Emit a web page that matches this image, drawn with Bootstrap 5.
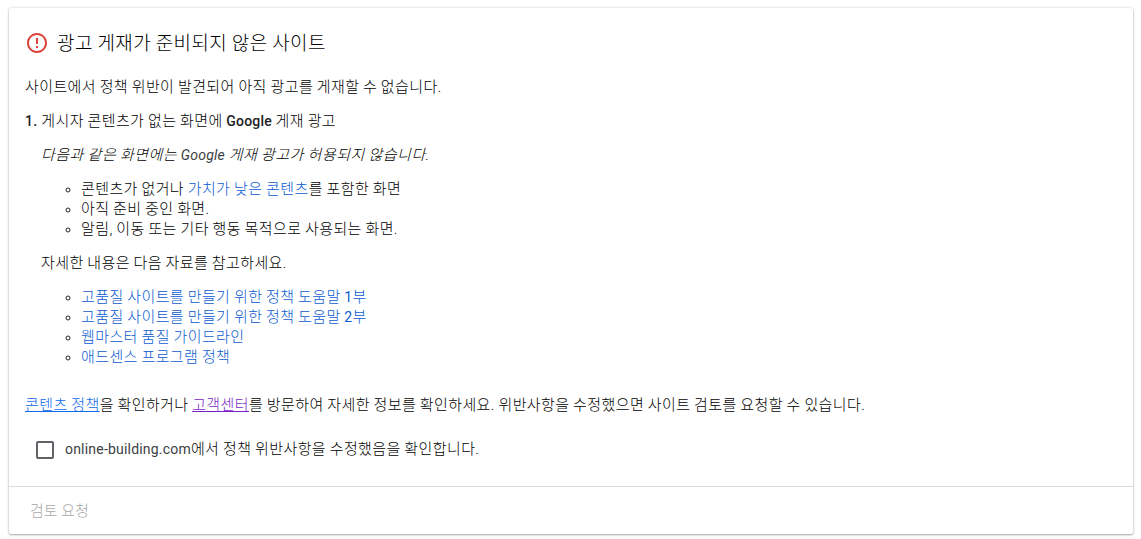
<!DOCTYPE html>
<html lang="ko">

<head>
  <meta charset="UTF-8">
  <meta name="viewport" content="width=device-width, initial-scale=1.0">
  <title>사이트 검토</title>
  <link href="https://cdn.jsdelivr.net/npm/bootstrap@5.3.0/dist/css/bootstrap.min.css" rel="stylesheet">
  <style>
    body {
      font-family: Roboto, "Noto Sans CJK KR", sans-serif;
      font-size: 15px;
      font-weight: 300;
      line-height: 20px;
      color: #000;
      background: #fff;
      padding: 8px 8px 5px 9px;
      letter-spacing: .4px;
      word-spacing: -.4px;
    }

    .review-card {
      width: 1124px;
      height: 526px;
      border: 0;
      border-radius: 2px;
      box-shadow: 0 1px 2px rgba(0, 0, 0, .3), 0 0 3px rgba(0, 0, 0, .16);
    }

    .review-body { padding: 23px 16px 0; }
    .review-heading { margin-bottom: 21px; }
    .review-title { font-size: 19px; font-weight: 300; line-height: 24px; padding-top: 1px; color: #000; }
    .review-body p { margin-bottom: 14px; }
    .review-body ul { padding-left: 40px; margin-bottom: 14px; list-style: circle; }
    .review-body li::marker { font-size: 13px; color: #202124; }
    .latin { font-size: 14px; font-weight: 400; letter-spacing: .2px; line-height: 1; }
    .latin-strong { font-weight: 500; color: #202124; }
    .latin-soft { color: #3c4043; }
    .issue { padding-left: 16px; }
    .issue .fst-italic { letter-spacing: .5px; }
    .review-body a { color: #0b5bd0; text-decoration: none; }
    .review-body .inline-link { color: #0f69ec; text-decoration: underline; }
    .review-body .visited { color: #7a1fc8; }
    .summary { margin-top: 28px; }

    .form-check-input.confirm-box {
      width: 18px;
      height: 18px;
      border: 2px solid #5f6368;
      border-radius: 2px;
    }

    .confirm-row { padding-left: 11px; margin-top: 24px; }
    .confirm-label { margin-left: 11px; padding-bottom: 2px; }
    .review-footer { height: 48px; border-top: 1px solid #dadce0; padding-left: 21px; }
    .request-btn { color: #a8a8a8; font-weight: 300; letter-spacing: 0; }
  </style>
</head>

<body>
  <main class="card review-card">
    <div class="review-body flex-grow-1">
      <div class="d-flex align-items-start review-heading">
        <svg class="me-2" width="24" height="24" viewBox="0 0 24 24" fill="#db4437" aria-hidden="true">
          <path d="M11 15h2v2h-2zm0-8h2v6h-2zm.99-5C6.47 2 2 6.48 2 12s4.47 10 9.99 10C17.52 22 22 17.52 22 12S17.52 2 11.99 2zM12 20c-4.42 0-8-3.58-8-8s3.58-8 8-8 8 3.58 8 8-3.58 8-8 8z" />
        </svg>
        <h1 class="review-title mb-0">광고 게재가 준비되지 않은 사이트</h1>
      </div>

      <p class="intro">사이트에서 정책 위반이 발견되어 아직 광고를 게재할 수 없습니다.</p>
      <p><span class="latin latin-strong me-1">1.</span>게시자 콘텐츠가 없는 화면에 <span class="latin latin-strong">Google</span> 게재 광고</p>

      <div class="issue">
        <p class="fst-italic">다음과 같은 화면에는 <span class="latin latin-soft">Google</span> 게재 광고가 허용되지 않습니다.</p>
        <ul>
          <li>콘텐츠가 없거나 <a href="#">가치가 낮은 콘텐츠</a>를 포함한 화면</li>
          <li>아직 준비 중인 화면.</li>
          <li>알림, 이동 또는 기타 행동 목적으로 사용되는 화면.</li>
        </ul>
        <p>자세한 내용은 다음 자료를 참고하세요.</p>
        <ul>
          <li><a href="#">고품질 사이트를 만들기 위한 정책 도움말 <span class="latin">1</span>부</a></li>
          <li><a href="#">고품질 사이트를 만들기 위한 정책 도움말 <span class="latin">2</span>부</a></li>
          <li><a href="#">웹마스터 품질 가이드라인</a></li>
          <li><a href="#">애드센스 프로그램 정책</a></li>
        </ul>
      </div>

      <p class="summary mb-0"><a class="inline-link" href="#">콘텐츠 정책</a>을 확인하거나 <a class="inline-link visited" href="#">고객센터</a>를 방문하여 자세한 정보를 확인하세요. 위반사항을 수정했으면 사이트 검토를 요청할 수 있습니다.</p>

      <div class="d-flex align-items-center confirm-row">
        <input class="form-check-input confirm-box flex-shrink-0 m-0" type="checkbox" id="confirm">
        <label class="confirm-label" for="confirm"><span class="latin latin-soft">online-building.com</span>에서 정책 위반사항을 수정했음을 확인합니다.</label>
      </div>
    </div>

    <div class="review-footer d-flex align-items-center">
      <button type="button" class="request-btn border-0 bg-transparent p-0" disabled>검토 요청</button>
    </div>
  </main>

  <script src="https://cdn.jsdelivr.net/npm/bootstrap@5.3.0/dist/js/bootstrap.bundle.min.js"></script>
</body>

</html>
